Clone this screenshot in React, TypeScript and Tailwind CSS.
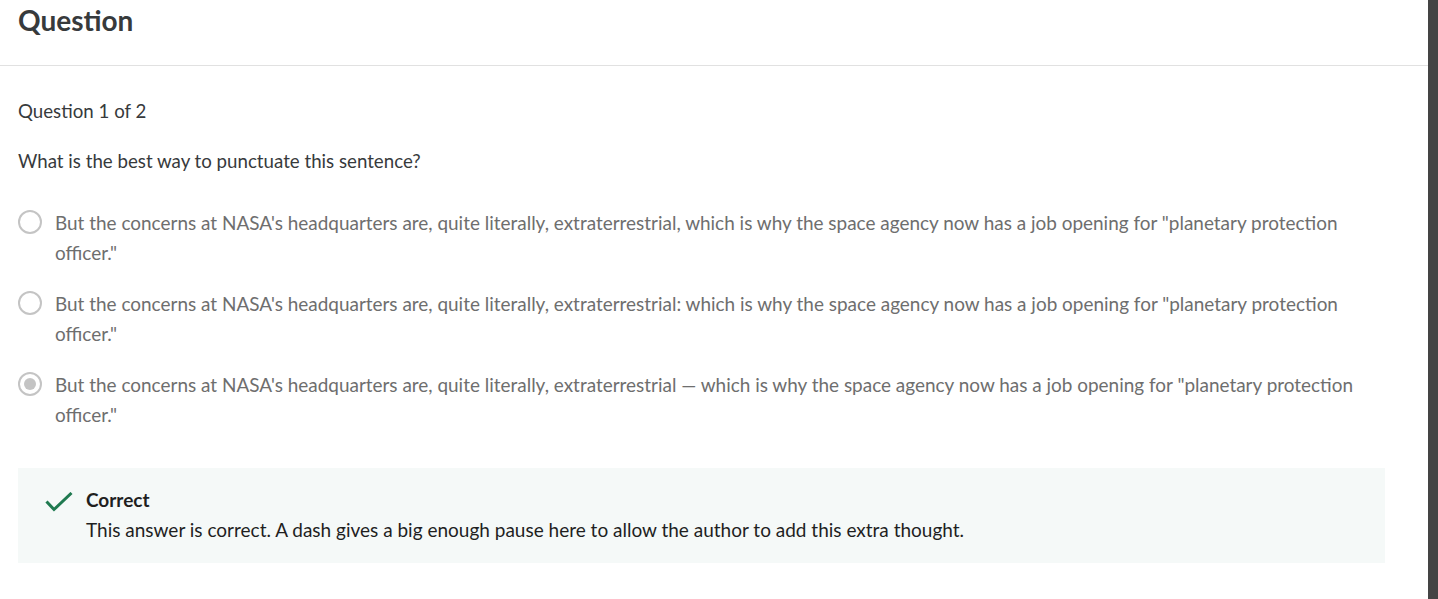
const options = [
  `But the concerns at NASA's headquarters are, quite literally, extraterrestrial, which is why the space agency now has a job opening for "planetary protection officer."`,
  `But the concerns at NASA's headquarters are, quite literally, extraterrestrial: which is why the space agency now has a job opening for "planetary protection officer."`,
  `But the concerns at NASA's headquarters are, quite literally, extraterrestrial — which is why the space agency now has a job opening for "planetary protection officer."`,
];

const App = () => {
  const selected = 2;

  return (
    <div className="flex h-[599px] bg-white overflow-hidden font-['Lato',sans-serif]">
      <div className="flex-1 min-w-0">
        {/* Header */}
        <div className="h-[66px] border-b border-[#e1e1e1] px-[18px] pt-[2px]">
          <h1 className="text-[28px] leading-[36px] font-bold text-[#373a3c]">Question</h1>
        </div>

        <div className="pl-[18px] pr-[43px] pt-[33px]">
          <p className="text-[18.7px] leading-[24px] text-[#373a3c]">Question 1 of 2</p>
          <p className="mt-[26px] text-[18.7px] leading-[24px] text-[#373a3c]">
            What is the best way to punctuate this sentence?
          </p>

          {/* Options */}
          <div className="mt-[35px] flex flex-col gap-[21px]">
            {options.map((text, i) => (
              <label key={i} className="flex items-start gap-[13px]">
                <span className="mt-[2px] w-6 h-6 shrink-0 rounded-full border-2 border-[#c4c4c4] flex items-center justify-center bg-white">
                  {selected === i && <span className="w-3 h-3 rounded-full bg-[#c4c4c4]" />}
                </span>
                <span className="text-[18.95px] leading-[30px] text-[#6e6e6e]">{text}</span>
              </label>
            ))}
          </div>

          {/* Feedback */}
          <div className="mt-[38px] bg-[#f5f9f8] flex gap-[13px] pl-[27px] pt-[20px] pb-[21px]">
            <svg width="28" height="22" viewBox="0 0 28 22" className="shrink-0 mt-[4px]" fill="none">
              <path d="M1.5 9.5 9 17.5 26.5 1" stroke="#1f7a50" strokeWidth="3" />
            </svg>
            <div>
              <p className="text-[19px] leading-[24px] font-bold text-[#1f1f1f]">Correct</p>
              <p className="mt-[6px] text-[19px] leading-[24px] text-[#1f1f1f]">
                This answer is correct. A dash gives a big enough pause here to allow the author to add this extra thought.
              </p>
            </div>
          </div>
        </div>
      </div>
      <div className="w-[10px] shrink-0 bg-[#444444]" />
    </div>
  );
};

export default App;
